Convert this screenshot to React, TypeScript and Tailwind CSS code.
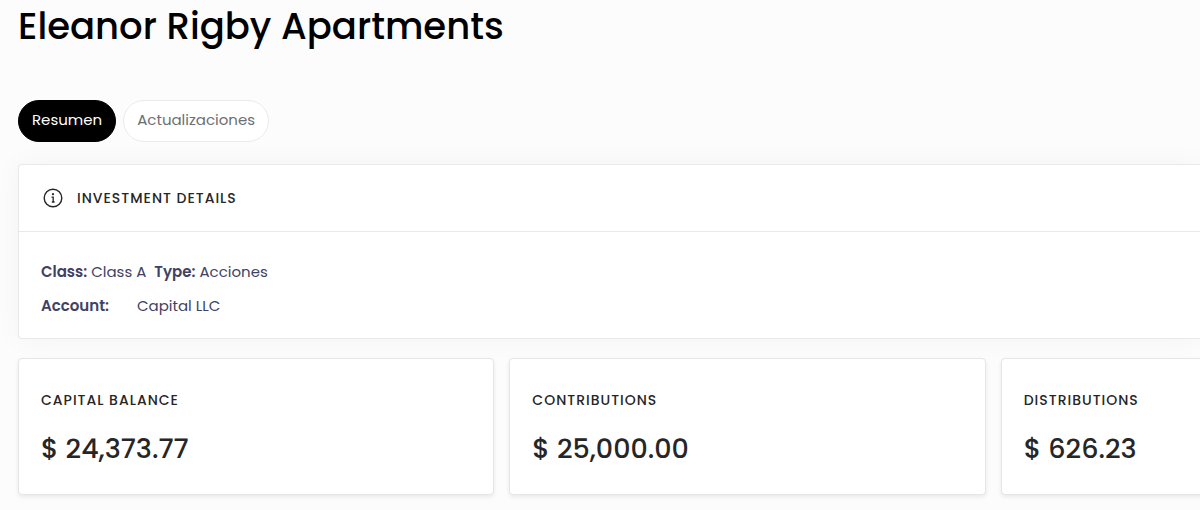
import React, { useState } from "react";
import clsx from "clsx";

const TABS = ["Resumen", "Actualizaciones"];

const STATS = [
    { label: "Capital balance", value: "$ 24,373.77" },
    { label: "Contributions", value: "$ 25,000.00" },
    { label: "Distributions", value: "$ 626.23" },
];

function InfoIcon() {
    return (
        <svg width="24" height="24" viewBox="0 0 24 24" fill="none" stroke="currentColor" strokeWidth="1.4" aria-hidden="true">
            <circle cx="12" cy="12" r="8.8" />
            <path d="M10.5 11.2h1.7v4.6M10.8 16h2.8" strokeWidth="1.3" />
            <circle cx="12" cy="8.2" r="1.1" fill="currentColor" stroke="none" />
        </svg>
    );
}

export default function App() {
    const [activeTab, setActiveTab] = useState(TABS[0]);

    return (
        <main className="min-h-screen overflow-hidden bg-[#fcfcfc] pl-[18px] pb-4 font-['Poppins','Inter',sans-serif] text-[#262626]">
            <h1 className="mb-12 text-[37px] leading-[52px] font-medium text-black">Eleanor Rigby Apartments</h1>

            {/* Tabs */}
            <nav className="mb-[22px] flex gap-[7px]">
                {TABS.map((tab) => (
                    <button
                        key={tab}
                        type="button"
                        onClick={() => setActiveTab(tab)}
                        className={clsx(
                            "h-[42px] cursor-pointer rounded-full border px-[13px] pb-0.5 text-[15px] leading-6",
                            activeTab === tab ? "border-black bg-black text-white" : "border-[#e9ecef] bg-white text-[#6c6f73]"
                        )}
                    >
                        {tab}
                    </button>
                ))}
            </nav>

            {/* Investment details */}
            <section className="mb-[19px] rounded-l border border-r-0 border-[#e9e9ea] bg-white shadow-[0_0_28px_rgba(0,0,0,0.04)]">
                <header className="flex items-center gap-3 border-b border-[#e9e9ea] px-[22px] py-[21px]">
                    <InfoIcon />
                    <h2 className="text-[14px] leading-6 font-medium tracking-[1px] uppercase">Investment details</h2>
                </header>
                <div className="flex flex-col gap-[10px] px-[22px] pt-7 pb-5 text-[15px] leading-6 text-[#3f4264]">
                    <div className="flex gap-2">
                        <p><strong className="font-semibold">Class:</strong> Class A</p>
                        <p><strong className="font-semibold">Type:</strong> Acciones</p>
                    </div>
                    <p className="flex gap-7"><strong className="font-semibold">Account:</strong> Capital LLC</p>
                </div>
            </section>

            {/* Balances, the row runs past the right edge */}
            <section className="grid auto-cols-[40.3%] grid-flow-col gap-[15px]">
                {STATS.map((stat) => (
                    <article key={stat.label} className="rounded border border-[#e6e6e7] bg-white px-[22px] pt-[29px] pb-6 shadow-[0_2px_4px_rgba(0,0,0,0.08)]">
                        <h3 className="mb-4 text-[14px] leading-6 font-medium tracking-[1px] uppercase">{stat.label}</h3>
                        <p className="text-[27px] leading-[42px] font-medium">{stat.value}</p>
                    </article>
                ))}
            </section>
        </main>
    );
}
